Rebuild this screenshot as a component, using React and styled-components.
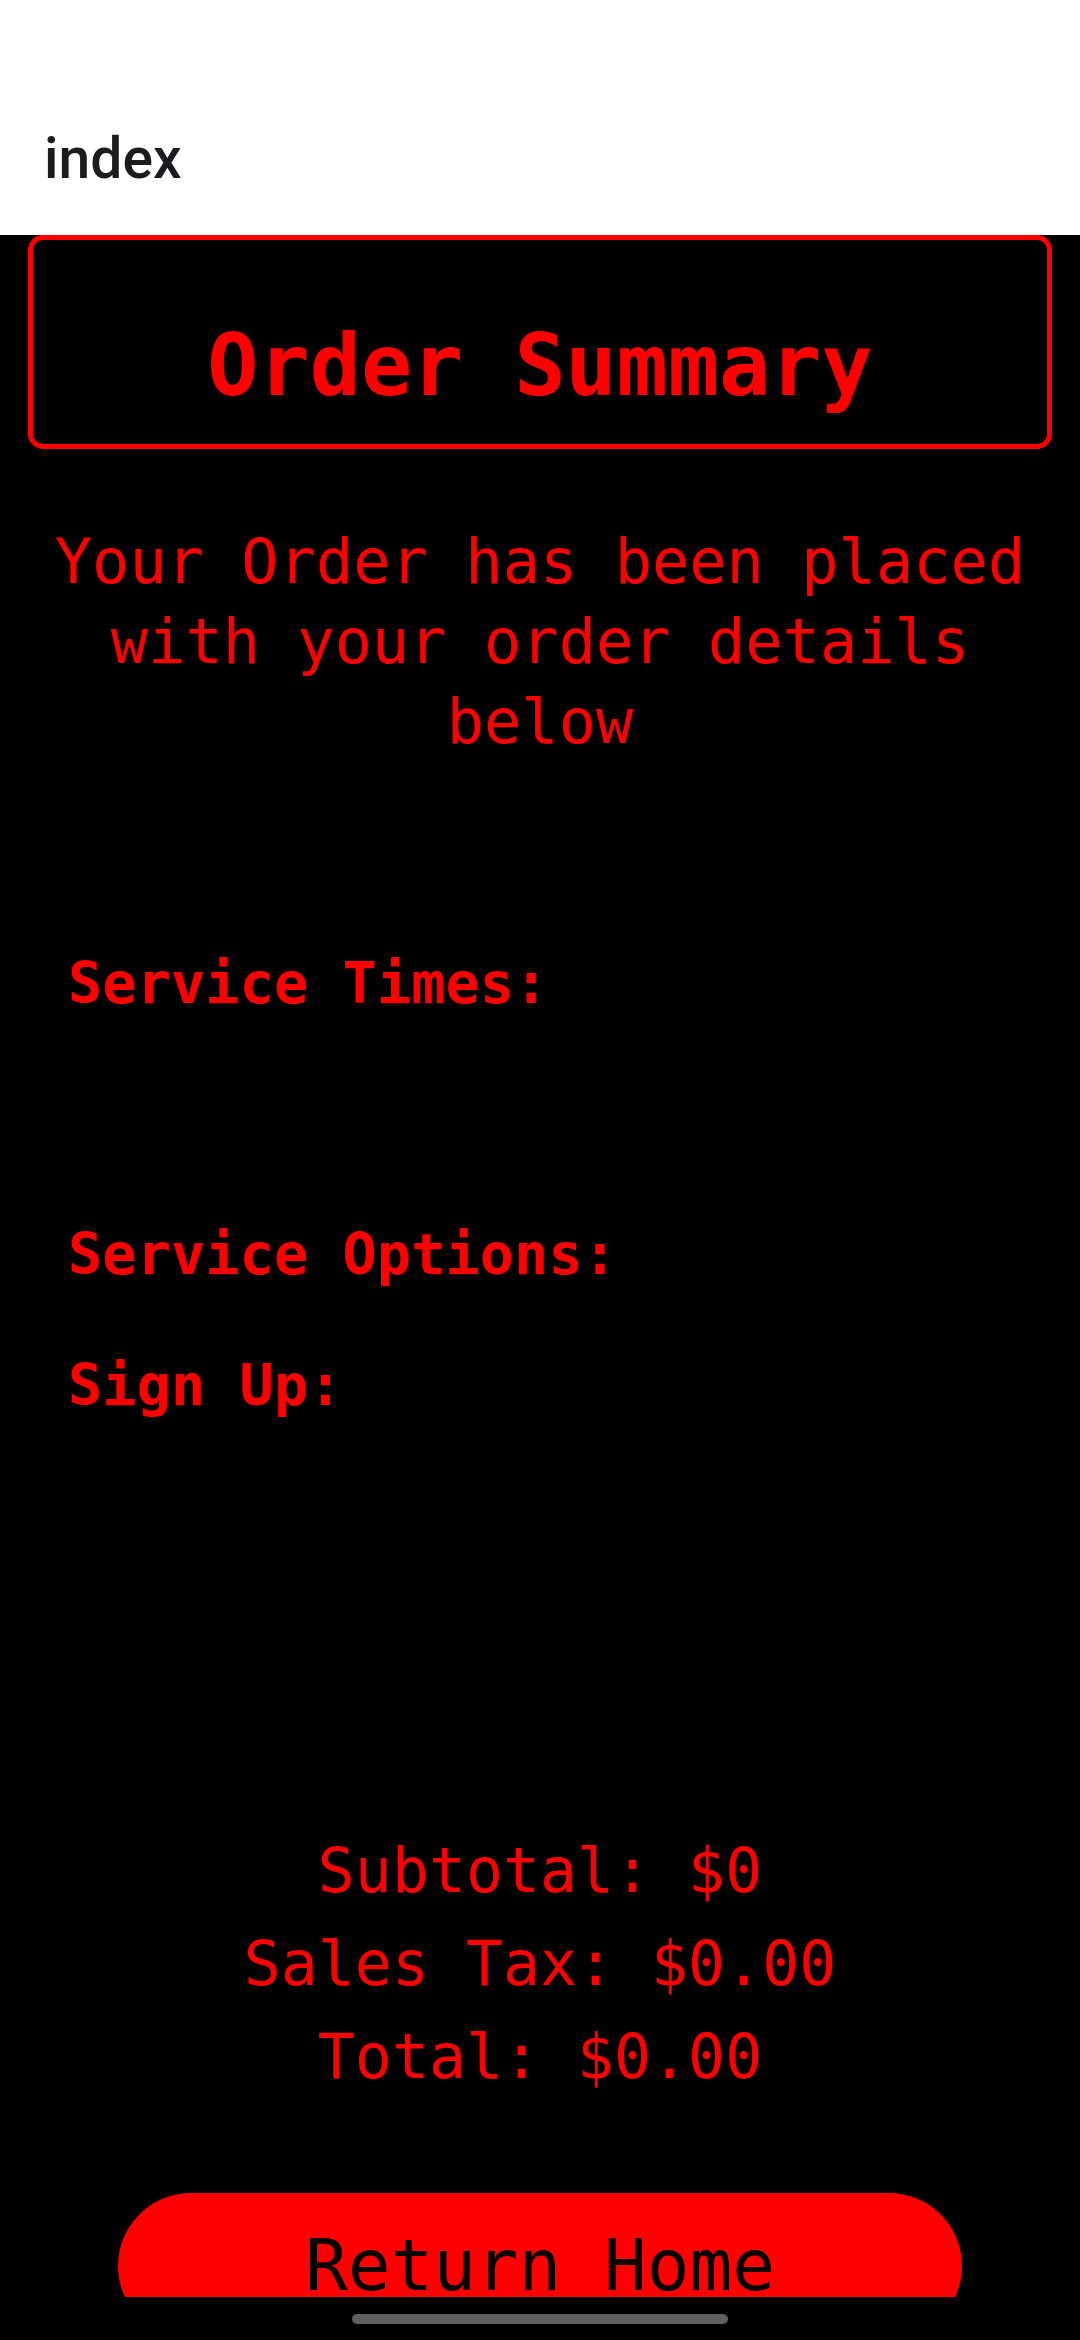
import React from "react";
import styled, { createGlobalStyle } from "styled-components";

const GlobalStyle = createGlobalStyle`
  html, body {
    margin: 0;
    padding: 0;
    background: #000000;
  }
`;

const RED = "#ff0000";
const MONO = `"DejaVu Sans Mono", "Liberation Mono", monospace`;

// whole phone screen
const Screen = styled.div`
  width: 1080px;
  height: 2340px;
  display: flex;
  flex-direction: column;
  background: #000000;
  overflow: hidden;
`;

// white stack header
const Header = styled.header`
  flex-shrink: 0;
  height: 235px;
  box-sizing: border-box;
  padding: 126px 0 0 44px;
  background: #ffffff;
`;

const HeaderTitle = styled.div`
  font-family: Roboto, "Noto Sans", sans-serif;
  font-weight: 500;
  font-size: 57px;
  line-height: 66px;
  color: #1c1b1f;
`;

// scroll area
const Content = styled.main`
  flex: 1;
  min-height: 0;
  overflow: hidden;
  padding: 0 28px;
  font-family: ${MONO};
  color: ${RED};
`;

const TitleBox = styled.div`
  border: 5px solid ${RED};
  border-radius: 15px;
  padding: 76px 0 28px;
  text-align: center;
`;

const Title = styled.h1`
  margin: 0;
  font-size: 85px;
  line-height: 100px;
  font-weight: 700;
`;

const Message = styled.p`
  margin: 73px 0 0;
  font-size: 62px;
  line-height: 80px;
  text-align: center;
`;

const SectionLabel = styled.h2`
  margin: ${(p) => p.$gap}px 0 0;
  padding-left: 40px;
  font-size: 57px;
  line-height: 70px;
  font-weight: 700;
`;

const Totals = styled.div`
  margin-top: 405px;
  text-align: center;
`;

const TotalLine = styled.div`
  font-size: 61.5px;
  line-height: 93px;
`;

const HomeButton = styled.button`
  display: block;
  width: 844px;
  margin: 89px auto 0;
  padding: 23px 0;
  border: none;
  border-radius: 75px;
  background: ${RED};
  color: #000000;
  font-family: ${MONO};
  font-size: 71px;
  line-height: 100px;
  cursor: pointer;
`;

// android gesture bar
const NavBar = styled.div`
  flex-shrink: 0;
  height: 43px;
  box-sizing: border-box;
  padding-top: 17px;
  display: flex;
  justify-content: center;
  background: #000000;
`;

const Pill = styled.div`
  width: 376px;
  height: 10px;
  border-radius: 5px;
  background: #5f5f5f;
`;

export default function App() {
  const subtotal = 0;
  const tax = 0;

  return (
    <>
      <GlobalStyle />
      <Screen>
        <Header>
          <HeaderTitle>index</HeaderTitle>
        </Header>
        <Content>
          <TitleBox>
            <Title>Order Summary</Title>
          </TitleBox>
          <Message>Your Order has been placed with your order details below</Message>

          <SectionLabel $gap={186}>Service Times:</SectionLabel>
          <SectionLabel $gap={201}>Service Options:</SectionLabel>
          <SectionLabel $gap={61}>Sign Up:</SectionLabel>

          <Totals>
            <TotalLine>Subtotal: ${subtotal}</TotalLine>
            <TotalLine>Sales Tax: ${tax.toFixed(2)}</TotalLine>
            <TotalLine>Total: ${(subtotal + tax).toFixed(2)}</TotalLine>
          </Totals>

          <HomeButton>Return Home</HomeButton>
        </Content>
        <NavBar>
          <Pill />
        </NavBar>
      </Screen>
    </>
  );
}
